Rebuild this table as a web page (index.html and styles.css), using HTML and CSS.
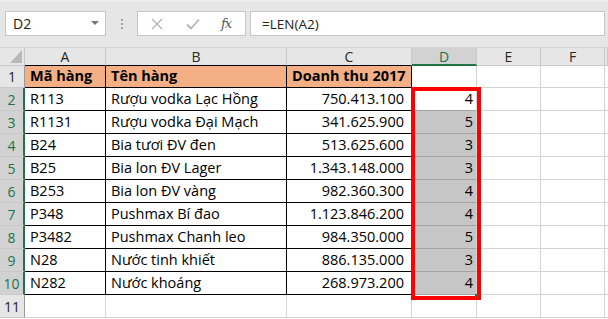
FILE: index.html
```html
<!DOCTYPE html>
<html>
<head>
<meta charset="utf-8">
<link rel="stylesheet" href="styles.css">
</head>
<body>
<div class="app">
  <div class="toolbar">
    <div class="namebox"><span>D2</span><svg class="caret" width="8" height="5" viewBox="0 0 8 5"><path d="M0 0H8L4 4Z" fill="#777"/></svg></div>
    <div class="grip"><i></i><i></i><i></i></div>
    <div class="fxbox">
      <svg class="ico" width="12" height="12" viewBox="0 0 12 12"><path d="M1 1L11 11M11 1L1 11" stroke="#b4b4b4" stroke-width="1.4" fill="none"/></svg>
      <svg class="ico" width="14" height="12" viewBox="0 0 14 12"><path d="M1 6.5L5 10.5L13 1.5" stroke="#b4b4b4" stroke-width="1.8" fill="none"/></svg>
      <span class="fx">fx</span>
    </div>
    <div class="formula">=LEN(A2)</div>
  </div>
  <div class="sheet">
    <div class="grid">
      <div class="h corner"><svg width="12" height="13" viewBox="0 0 12 13"><path d="M12 0V13H0Z" fill="#b8b8b8"/></svg></div>
      <div class="h col">A</div>
      <div class="h col">B</div>
      <div class="h col">C</div>
      <div class="h col sel">D</div>
      <div class="h col">E</div>
      <div class="h col">F</div>
      <div class="h col last"></div>

      <div class="h row">1</div>
      <div class="c t hd">Mã hàng</div>
      <div class="c t hd">Tên hàng</div>
      <div class="c t hd">Doanh thu 2017</div>
      <div class="c"></div><div class="c"></div><div class="c"></div><div class="c"></div>

      <div class="h row rs">2</div>
      <div class="c t">R113</div>
      <div class="c t">Rượu vodka Lạc Hồng</div>
      <div class="c t num">750.413.100</div>
      <div class="c d act">4</div><div class="c"></div><div class="c"></div><div class="c"></div>

      <div class="h row rs">3</div>
      <div class="c t">R1131</div>
      <div class="c t">Rượu vodka Đại Mạch</div>
      <div class="c t num">341.625.900</div>
      <div class="c d">5</div><div class="c"></div><div class="c"></div><div class="c"></div>

      <div class="h row rs">4</div>
      <div class="c t">B24</div>
      <div class="c t">Bia tươi ĐV đen</div>
      <div class="c t num">513.625.600</div>
      <div class="c d">3</div><div class="c"></div><div class="c"></div><div class="c"></div>

      <div class="h row rs">5</div>
      <div class="c t">B25</div>
      <div class="c t">Bia lon ĐV Lager</div>
      <div class="c t num">1.343.148.000</div>
      <div class="c d">3</div><div class="c"></div><div class="c"></div><div class="c"></div>

      <div class="h row rs">6</div>
      <div class="c t">B253</div>
      <div class="c t">Bia lon ĐV vàng</div>
      <div class="c t num">982.360.300</div>
      <div class="c d">4</div><div class="c"></div><div class="c"></div><div class="c"></div>

      <div class="h row rs">7</div>
      <div class="c t">P348</div>
      <div class="c t">Pushmax Bí đao</div>
      <div class="c t num">1.123.846.200</div>
      <div class="c d">4</div><div class="c"></div><div class="c"></div><div class="c"></div>

      <div class="h row rs">8</div>
      <div class="c t">P3482</div>
      <div class="c t">Pushmax Chanh leo</div>
      <div class="c t num">984.350.000</div>
      <div class="c d">5</div><div class="c"></div><div class="c"></div><div class="c"></div>

      <div class="h row rs">9</div>
      <div class="c t">N28</div>
      <div class="c t">Nước tinh khiết</div>
      <div class="c t num">886.135.000</div>
      <div class="c d">3</div><div class="c"></div><div class="c"></div><div class="c"></div>

      <div class="h row rs">10</div>
      <div class="c t">N282</div>
      <div class="c t">Nước khoáng</div>
      <div class="c t num">268.973.200</div>
      <div class="c d">4</div><div class="c"></div><div class="c"></div><div class="c"></div>

      <div class="h row">11</div>
      <div class="c"></div><div class="c"></div><div class="c"></div><div class="c"></div><div class="c"></div><div class="c"></div><div class="c"></div>
    </div>
    <div class="redbox"></div>
    <div class="handle"></div>
  </div>
</div>
</body>
</html>
```

FILE: styles.css
```css
* { box-sizing: border-box; }
html, body { margin: 0; padding: 0; }
body { width: 608px; height: 319px; overflow: hidden; background: #fff; font-family: "Open Sans", "Noto Sans", sans-serif; }

.app { width: 608px; }

.toolbar {
  height: 47px;
  background: #e6e6e6;
  border-top: 2px solid #ededed;
  display: flex;
  align-items: flex-start;
  padding-top: 9px;
}
.namebox {
  margin-left: 5px;
  width: 101px;
  height: 25px;
  background: #fff;
  border: 1px solid #c6c6c6;
  display: flex;
  align-items: center;
  justify-content: space-between;
  padding: 0 6px 0 7px;
  font-size: 14px;
  color: #222;
}
.grip {
  width: 31px;
  height: 25px;
  display: flex;
  flex-direction: column;
  align-items: center;
  justify-content: center;
  gap: 2px;
}
.grip i { display: block; width: 2px; height: 2px; background: #a6a6a6; }
.fxbox {
  width: 109px;
  height: 25px;
  background: #fff;
  border: 1px solid #c6c6c6;
  display: flex;
  align-items: center;
  padding-left: 13px;
  gap: 0;
}
.fxbox .ico:nth-child(1) { margin-right: 23px; }
.fxbox .ico:nth-child(2) { margin-right: 21px; }
.fx {
  font-family: "DejaVu Serif", "Liberation Serif", serif;
  font-style: italic;
  font-size: 13px;
  color: #555;
  letter-spacing: -1px;
}
.formula {
  margin-left: 4px;
  width: 355px;
  height: 25px;
  background: #fff;
  border: 1px solid #c6c6c6;
  display: flex;
  align-items: center;
  padding-left: 11px;
  font-size: 13.5px;
  color: #222;
}

.sheet { position: relative; }
.grid {
  display: grid;
  grid-template-columns: 25px 81px 181px 125px 65px 64px 64px 3px;
  grid-template-rows: 19px 22px repeat(10, 23px);
}
.h {
  background: #e6e6e6;
  border-right: 1px solid #c9c9c9;
  border-bottom: 1px solid #c9c9c9;
  font-size: 14px;
  color: #262626;
  display: flex;
  align-items: center;
  justify-content: center;
}
.col { border-top: 1px solid #d5d5d5; border-bottom-color: #000; }
.col.sel { background: #d2d2d2; color: #217346; border-bottom: 2px solid #217346; }
.col:nth-child(6), .col:nth-child(7), .col.last { border-bottom-color: #c9c9c9; }
.corner { border-top: 1px solid #d5d5d5; align-items: flex-end; justify-content: flex-end; padding: 0 2px 2px 0; }
.corner svg { display: block; }
.row { border-right-color: #9b9b9b; }
.row.rs { background: #d2d2d2; color: #217346; border-right: 2px solid #217346; }

.c {
  border-right: 1px solid #d4d4d4;
  border-bottom: 1px solid #d4d4d4;
  font-size: 14.5px;
  color: #000;
  display: flex;
  align-items: flex-end;
  padding: 0 4px 2px 5px;
  white-space: nowrap;
  overflow: visible;
  line-height: 18px;
}
.c.t { border-right-color: #000; border-bottom-color: #000; }
.c.hd { background: #f4b084; font-weight: bold; }
.c.num { justify-content: flex-end; padding-right: 7px; }
.c.d { justify-content: flex-end; padding-right: 3px; background: #c6c6c6; border-bottom-color: #a3a3a3; }
.c.d.act { background: #fff; }

.redbox {
  position: absolute;
  left: 411px;
  top: 40px;
  width: 70px;
  height: 213px;
  border: 4px solid #ff0000;
}
.handle {
  position: absolute;
  left: 475px;
  top: 247px;
  width: 3px;
  height: 3px;
  background: #217346;
}
```
